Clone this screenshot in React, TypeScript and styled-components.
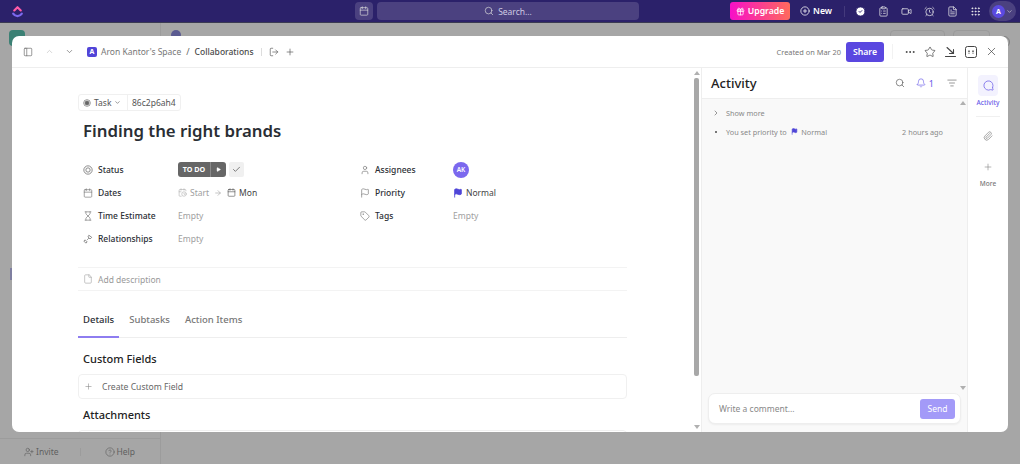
import React from "react";
import styled, { createGlobalStyle } from "styled-components";
import {
  Search, Calendar, CircleCheck, ClipboardList, Video, AlarmClock, FileText, Grip, ChevronDown, ChevronUp, ChevronRight,
  PanelLeft, LogOut, Plus, Ellipsis, Star, X, User, Flag, Tag, Hourglass, File, Bell,
  ListFilter, Paperclip, MessageCircle, Check, Play, ArrowRight, CirclePlus, CalendarClock, UserPlus, CircleHelp, Gift,
} from "lucide-react";

const Global = createGlobalStyle`
  html, body { margin: 0; padding: 0; height: 100%; overflow: hidden; }
  body { font-family: "Noto Sans", "Liberation Sans", sans-serif; background: #a6a6a6; }
  * { box-sizing: border-box; }
`;

const Page = styled.div`position: relative; width: 1020px; height: 464px; overflow: hidden; background: #a6a6a6; display: flex; flex-direction: column;`;
const TopBar = styled.header`height: 23px; background: #2b216a; display: flex; align-items: center; color: #fff; border-bottom: 1px solid #3a3a52; flex-shrink: 0;`;
const Logo = styled.svg`margin-left: 11px; width: 13px; height: 13px;`;
const Center = styled.div`margin-left: 331px; display: flex; gap: 4px; align-items: center;`;
const CalBtn = styled.div`width: 18px; height: 18px; border-radius: 4px; background: #4b4180; display: flex; align-items: center; justify-content: center;`;
const SearchBox = styled.div`width: 262px; height: 18px; border-radius: 4px; background: #4b4180; display: flex; align-items: center; justify-content: center; gap: 4px; font-size: 8.5px; color: #cfcbe3;`;
const Upgrade = styled.div`margin-left: 91px; width: 60px; height: 18px; border-radius: 3px; background: linear-gradient(90deg, #f70fc8, #ff6a5c); display: flex; align-items: center; justify-content: center; gap: 3px; font-size: 8.7px; font-weight: 600;`;
const NewBtn = styled.div`margin-left: 10px; display: flex; align-items: center; gap: 3px; font-size: 8.7px; font-weight: 600;`;
const BarRule = styled.div`margin-left: 12px; width: 1px; height: 11px; background: #443a7c;`;
const BarIcons = styled.div`margin-left: 10px; display: flex; gap: 12px; align-items: center;`;
const AvatarPill = styled.div`margin-left: 8px; width: 27px; height: 20px; border-radius: 10px; background: #4b4180; display: flex; align-items: center; padding-left: 3px; gap: 1px;`;
const AvatarDot = styled.div`width: 13px; height: 13px; border-radius: 50%; background: #5b4ae0; font-size: 7px; font-weight: 700; display: flex; align-items: center; justify-content: center;`;

const Behind = styled.div`flex: 1; display: grid; grid-template-columns: 161px 1fr; min-height: 0;`;
const BehindSide = styled.aside`border-right: 1px solid #9c9c9c; display: flex; flex-direction: column; padding-top: 7px;`;
const GhostTile = styled.div`margin-left: 9px; width: 16px; height: 16px; border-radius: 4px; background: #3b8074; flex-shrink: 0;`;
const GhostBlock = styled.div`margin: 222px 0 0 10px; width: 4px; height: 12px; background: #7f7fa0;`;
const BehindMain = styled.div`display: flex; align-items: flex-start; padding: 7px 10px 0 10px; gap: 8px;`;
const GhostDot = styled.div`width: 10px; height: 10px; border-radius: 50%; background: #5a5a90;`;
const GhostPill = styled.div<{ $w: number; $first?: boolean }>`width: ${p => p.$w}px; height: 14px; border: 1px solid #9a9a9a; border-radius: 4px; ${p => p.$first ? "margin-left: auto;" : ""}`;
const GhostCircle = styled.div`width: 12px; height: 12px; border-radius: 50%; border: 1px solid #808080; margin-top: 6px;`;
const Foot = styled.div`height: 26px; margin-top: auto; border-top: 1px solid #9c9c9c; display: flex; align-items: center; padding-left: 24px; font-size: 8.5px; color: #5f5f5f;`;
const FootItem = styled.span`display: flex; align-items: center; gap: 2px;`;
const FootRule = styled.span`width: 1px; height: 8px; background: #9c9c9c; margin: 0 24px 0 21px;`;

const Modal = styled.section`position: absolute; left: 12px; top: 36px; width: 996px; height: 396px; background: #fff; border-radius: 7px; display: flex; flex-direction: column; overflow: hidden;`;
const ModalHead = styled.div`height: 32px; flex-shrink: 0; border-bottom: 1px solid #eeeeee; display: flex; align-items: center; padding: 0 10px 0 11px; color: #555;`;
const Crumb = styled.span<{ $strong?: boolean }>`font-size: 8.5px; color: ${p => p.$strong ? "#4a4a4a" : "#777"}; font-weight: ${p => p.$strong ? 500 : 400};`;
const SpaceIcon = styled.div`width: 10px; height: 10px; border-radius: 2px; background: #5145d8; color: #fff; font-size: 7px; font-weight: 700; display: flex; align-items: center; justify-content: center; margin-left: 13px; margin-right: 4px;`;
const Nav = styled.div`display: flex; align-items: center; gap: 11px; margin-left: 12px;`;
const Slash = styled.span`font-size: 9px; color: #666; margin: 0 5px;`;
const HeadRule = styled.div`width: 1px; height: 8px; background: #ddd; margin: 0 7px;`;
const HeadGap = styled.span`width: 6px;`;
const Spacer = styled.div`flex: 1;`;
const Created = styled.span`font-size: 7.4px; color: #777; margin-right: 5px;`;
const Share = styled.div`width: 38px; height: 20px; background: #5a47e0; color: #fff; border-radius: 3px; display: flex; align-items: center; justify-content: center; font-size: 8.7px; font-weight: 600;`;
const ShareRule = styled.div`width: 1px; height: 15px; background: #f2f2f2; margin: 0 11px 0 8px;`;
const HeadActions = styled.div`display: flex; align-items: center; gap: 8px; color: #444;`;

const Body = styled.div`flex: 1; display: flex; min-height: 0;`;
const Main = styled.div`width: 680px; padding: 26px 0 0 66px; overflow: hidden; flex-shrink: 0;`;
const Inner = styled.div`width: 549px;`;
const TaskPill = styled.div`display: flex; width: 103px; align-items: center; height: 17px; border: 1px solid #f0f0f0; border-radius: 3px; font-size: 8.5px; color: #555;`;
const TaskPart = styled.span`display: flex; align-items: center; gap: 3px; padding: 0 0 0 4px; width: 48px; height: 100%;`;
const IdPart = styled.span`padding: 0 4px; border-left: 1px solid #f0f0f0; height: 100%; display: flex; align-items: center;`;
const Title = styled.h1`margin: 7px 0 0 5px; font-size: 16.8px; line-height: 26px; font-weight: 600; color: #2a2e34;`;
const Fields = styled.div`margin-top: 14px; display: grid; grid-template-columns: 277px 1fr; padding-left: 5px;`;
const FieldCol = styled.div`display: flex; flex-direction: column;`;
const Row = styled.div<{ $w: number }>`height: 23px; display: grid; grid-template-columns: ${p => p.$w}px 1fr; align-items: center;`;
const Label = styled.span`display: flex; align-items: center; gap: 5px; font-size: 8.5px; font-weight: 500; color: #2a2e34;`;
const Value = styled.span`display: flex; align-items: center; font-size: 8.5px; color: #a0a0a0; gap: 3px;`;
const Dark = styled.span`color: #444; display: flex; align-items: center; gap: 3px;`;
const StatusBtn = styled.div`height: 15px; width: 48px; background: #666; border-radius: 3px; color: #fff; font-size: 7.2px; font-weight: 700; display: flex; align-items: center;`;
const StatusText = styled.span`width: 33px; text-align: center; border-right: 1px solid #8a8a8a; line-height: 15px;`;
const CheckBtn = styled.div`width: 15px; height: 15px; background: #f0f0f0; border-radius: 2px; display: flex; align-items: center; justify-content: center;`;
const Avatar = styled.div`width: 16px; height: 16px; border-radius: 50%; background: #7b68ee; color: #fff; font-size: 6.5px; font-weight: 600; display: flex; align-items: center; justify-content: center;`;
const Desc = styled.div`margin-top: 17px; height: 24px; border-top: 1px solid #f3f3f3; border-bottom: 1px solid #f3f3f3; display: flex; align-items: center; gap: 5px; padding-left: 5px; font-size: 8.5px; color: #999;`;
const Tabs = styled.div`margin-top: 21px; height: 26px; border-bottom: 1px solid #eeeeee; display: flex; font-size: 9.5px;`;
const Tab = styled.div<{ $on?: boolean }>`padding: 0 5px; margin-right: 5px; height: 26px; display: flex; align-items: flex-start; line-height: 16px; font-weight: 500; color: ${p => p.$on ? "#2a2e34" : "#777"}; border-bottom: ${p => p.$on ? "2px solid #8e7df0" : "none"};`;
const Section = styled.h2<{ $gap: number }>`margin: ${p => p.$gap}px 0 0 5px; font-size: 11px; font-weight: 500; color: #222; line-height: 16px;`;
const CreateBox = styled.div`margin-top: 7px; height: 25px; border: 1px solid #f0f0f0; border-radius: 4px; display: flex; align-items: center; gap: 9px; padding-left: 5px; font-size: 8.6px; color: #666;`;
const AttachBox = styled.div`margin-top: 7px; height: 25px; border: 1px solid #f0f0f0; border-radius: 4px;`;

const Scroll = styled.div`width: 9px; flex-shrink: 0; display: flex; flex-direction: column; align-items: center; padding: 3px 0; gap: 3px;`;
const UpArrow = styled.div`width: 0; height: 0; border: 3px solid transparent; border-top: 0; border-bottom: 4px solid #b0b0b0;`;
const DownArrow = styled.div`width: 0; height: 0; border: 3px solid transparent; border-bottom: 0; border-top: 4px solid #b0b0b0; margin-top: auto;`;
const Thumb = styled.div`width: 5px; height: 298px; background: #a8a8a8; border-radius: 2px;`;

const Activity = styled.div`width: 267px; flex-shrink: 0; display: flex; flex-direction: column; border-left: 1px solid #eee; border-right: 1px solid #eee; position: relative;`;
const ActHead = styled.div`height: 31px; display: flex; align-items: center; padding: 0 10px 0 9px; border-bottom: 1px solid #eee; color: #555;`;
const ActTitle = styled.h2`margin: 0; font-size: 13px; font-weight: 500; color: #222;`;
const Notif = styled.span`display: flex; align-items: center; gap: 3px; color: #6a5ce8; font-size: 9px; margin: 0 13px 0 11px;`;
const Feed = styled.div`flex: 1; background: #f9f9f9; padding: 9px 0 0 10px; position: relative; display: flex; flex-direction: column; gap: 10px;`;
const FeedRow = styled.div`display: flex; align-items: center; font-size: 7.3px; color: #888; height: 9px;`;
const Bullet = styled.span`width: 2px; height: 2px; background: #777; margin: 0 9px 0 3px; flex-shrink: 0;`;
const Time = styled.span`margin-left: 75px;`;
const FeedScroll = styled.div`position: absolute; right: 1px; top: 2px; bottom: 42px; display: flex; flex-direction: column; align-items: center;`;
const Comment = styled.div`position: absolute; left: 6px; bottom: 8px; width: 253px; height: 31px; background: #fff; border: 1px solid #eee; border-radius: 7px; box-shadow: 0 1px 2px rgba(0,0,0,.05); display: flex; align-items: center; justify-content: space-between; padding: 0 5px 0 10px; font-size: 8.5px; color: #888;`;
const Send = styled.div`width: 35px; height: 20px; background: #a39af8; color: #fff; border-radius: 3px; font-size: 8.5px; display: flex; align-items: center; justify-content: center;`;

const Rail = styled.div`flex: 1; display: flex; flex-direction: column; align-items: center; padding-top: 7px; color: #888;`;
const RailBtn = styled.div`width: 20px; height: 21px; background: #f3f2fe; border-radius: 4px; display: flex; align-items: center; justify-content: center; color: #6a5ce8;`;
const RailText = styled.span<{ $on?: boolean }>`font-size: 6.5px; font-weight: 500; margin-top: ${p => p.$on ? 2 : 6}px; color: ${p => p.$on ? "#6a5ce8" : "#777"};`;
const RailRule = styled.div`width: 24px; height: 1px; background: #f0f0f0; margin: 9px 0 13px;`;
const RailIcon = styled.div`height: 12px; display: flex; align-items: center; margin-bottom: 19px;`;
const RailPlus = styled.div`height: 12px; display: flex; align-items: center;`;
const FlipIcon = styled(MessageCircle)`transform: scaleX(-1);`;
const PlayMark = styled(Play)`margin-left: 5px;`;
const DateArrow = styled(ArrowRight)`margin: 0 2px;`;
const FeedChevron = styled(ChevronRight)`margin-right: 6px;`;
const Svg = styled.svg`flex-shrink: 0;`;

const RingIcon = ({ filled, size = 10, color = "#777" }: { filled?: boolean; size?: number; color?: string }) => (
  <Svg width={size} height={size} viewBox="0 0 12 12" fill="none" stroke={color} strokeWidth="1">
    <circle cx="6" cy="6" r="5" />
    {filled ? <circle cx="6" cy="6" r="3" fill={color} /> : <circle cx="6" cy="6" r="2.6" />}
  </Svg>
);
const RelIcon = () => (
  <Svg width="10" height="10" viewBox="0 0 12 12" fill="none" stroke="#777" strokeWidth="1">
    <path d="M2.5 7 L5 9.5 L3.5 11 L1 8.5 Z M7 1.5 L10.5 4 L8.5 6 L6 3.5 Z M5 7 L7 5" />
  </Svg>
);
const DownIcon = () => (
  <Svg width="13" height="12" viewBox="0 0 13 12" fill="none" stroke="#444" strokeWidth="1.1" strokeLinecap="round">
    <path d="M3 1.5 L9.5 7.5 M9.5 3.5 V7.5 H5.5 M1.5 10.5 H11.5" />
  </Svg>
);
const FrameIcon = () => (
  <Svg width="12" height="12" viewBox="0 0 12 12" fill="none" stroke="#444" strokeWidth="1">
    <rect x="0.5" y="0.5" width="11" height="11" rx="2" />
    <path d="M4 4.5 V7.5 M8 4.5 V7.5" strokeWidth="1.4" strokeDasharray="1.4 0.8" />
  </Svg>
);

const sw = 1.6;
const Ic = (C: any, s = 10, c = "#777") => <C size={s} color={c} strokeWidth={sw} />;

export default function App() {
  return (
    <Page>
      <Global />
      <TopBar>
        <Logo viewBox="0 0 24 24" fill="none" strokeWidth="4" strokeLinecap="round" strokeLinejoin="round">
          <path d="M6 10 L12 4 L18 10" stroke="#ff5ca8" />
          <path d="M4 16 C8 22 16 22 20 16" stroke="#7b68ee" />
        </Logo>
        <Center>
          <CalBtn><Calendar size={10} color="#ddd" strokeWidth={1.6} /></CalBtn>
          <SearchBox><Search size={10} color="#ddd" strokeWidth={1.6} />Search...</SearchBox>
        </Center>
        <Upgrade><Gift size={9} color="#fff" strokeWidth={2} />Upgrade</Upgrade>
        <NewBtn><CirclePlus size={10} color="#fff" strokeWidth={1.8} />New</NewBtn>
        <BarRule />
        <BarIcons>
          <CircleCheck size={11} color="#2b216a" fill="#fff" strokeWidth={2} />
          <ClipboardList size={11} color="#eee" strokeWidth={1.6} />
          <Video size={11} color="#eee" strokeWidth={1.6} />
          <AlarmClock size={11} color="#eee" strokeWidth={1.6} />
          <FileText size={11} color="#eee" strokeWidth={1.6} />
          <Grip size={11} color="#eee" strokeWidth={2} />
        </BarIcons>
        <AvatarPill><AvatarDot>A</AvatarDot><ChevronDown size={7} color="#ddd" /></AvatarPill>
      </TopBar>
      <Behind>
        <BehindSide>
          <GhostTile />
          <GhostBlock />
          <Foot>
            <FootItem><UserPlus size={10} color="#5f5f5f" strokeWidth={1.5} />Invite</FootItem>
            <FootRule />
            <FootItem><CircleHelp size={10} color="#5f5f5f" strokeWidth={1.5} />Help</FootItem>
          </Foot>
        </BehindSide>
        <BehindMain>
          <GhostDot />
          <GhostPill $w={55} $first />
          <GhostPill $w={37} />
          <GhostCircle />
        </BehindMain>
      </Behind>
      <Modal>
        <ModalHead>
          <PanelLeft size={10} color="#666" strokeWidth={1.6} />
          <Nav>
            <ChevronUp size={9} color="#bbb" strokeWidth={1.6} />
            <ChevronDown size={9} color="#555" strokeWidth={1.6} />
          </Nav>
          <SpaceIcon>A</SpaceIcon>
          <Crumb>Aron Kantor's Space</Crumb>
          <Slash>/</Slash>
          <Crumb $strong>Collaborations</Crumb>
          <HeadRule />
          <LogOut size={10} color="#555" strokeWidth={1.6} />
          <HeadGap />
          <Plus size={10} color="#555" strokeWidth={1.6} />
          <Spacer />
          <Created>Created on Mar 20</Created>
          <Share>Share</Share>
          <ShareRule />
          <HeadActions>
            <Ellipsis size={12} color="#444" strokeWidth={2} />
            <Star size={12} color="#444" strokeWidth={1.4} />
            <DownIcon />
            <FrameIcon />
            <X size={13} color="#444" strokeWidth={1.3} />
          </HeadActions>
        </ModalHead>
        <Body>
          <Main>
            <Inner>
              <TaskPill>
                <TaskPart><RingIcon filled size={8} color="#666" />Task<ChevronDown size={7} color="#555" /></TaskPart>
                <IdPart>86c2p6ah4</IdPart>
              </TaskPill>
              <Title>Finding the right brands</Title>
              <Fields>
                <FieldCol>
                  <Row $w={95}><Label><RingIcon />Status</Label>
                    <Value>
                      <StatusBtn><StatusText>TO DO</StatusText><PlayMark size={5} fill="#fff" color="#fff" /></StatusBtn>
                      <CheckBtn><Check size={9} color="#555" /></CheckBtn>
                    </Value>
                  </Row>
                  <Row $w={95}><Label>{Ic(Calendar)}Dates</Label>
                    <Value>
                      <CalendarClock size={9} color="#aaa" strokeWidth={1.5} />Start
                      <DateArrow size={8} color="#aaa" />
                      <Dark><Calendar size={9} color="#444" strokeWidth={1.5} />Mon</Dark>
                    </Value>
                  </Row>
                  <Row $w={95}><Label>{Ic(Hourglass)}Time Estimate</Label><Value>Empty</Value></Row>
                  <Row $w={95}><Label><RelIcon />Relationships</Label><Value>Empty</Value></Row>
                </FieldCol>
                <FieldCol>
                  <Row $w={93}><Label>{Ic(User)}Assignees</Label><Value><Avatar>AK</Avatar></Value></Row>
                  <Row $w={93}><Label>{Ic(Flag)}Priority</Label><Value><Flag size={10} color="#4f46d8" fill="#4f46d8" /><Dark>Normal</Dark></Value></Row>
                  <Row $w={93}><Label>{Ic(Tag)}Tags</Label><Value>Empty</Value></Row>
                </FieldCol>
              </Fields>
              <Desc>{Ic(File, 10, "#aaa")}Add description</Desc>
              <Tabs>
                <Tab $on>Details</Tab>
                <Tab>Subtasks</Tab>
                <Tab>Action Items</Tab>
              </Tabs>
              <Section $gap={13}>Custom Fields</Section>
              <CreateBox><Plus size={9} color="#888" strokeWidth={1.5} />Create Custom Field</CreateBox>
              <Section $gap={8}>Attachments</Section>
              <AttachBox />
            </Inner>
          </Main>
          <Scroll><UpArrow /><Thumb /><DownArrow /></Scroll>
          <Activity>
            <ActHead>
              <ActTitle>Activity</ActTitle>
              <Spacer />
              <Search size={10} color="#555" strokeWidth={1.6} />
              <Notif><Bell size={10} color="#6a5ce8" strokeWidth={1.6} />1</Notif>
              <ListFilter size={10} color="#666" strokeWidth={1.6} />
            </ActHead>
            <Feed>
              <FeedRow><FeedChevron size={8} color="#666" />Show more</FeedRow>
              <FeedRow><Bullet />You set priority to&nbsp;&nbsp;<Flag size={7} color="#4f46d8" fill="#4f46d8" />&nbsp;&nbsp;Normal<Time>2 hours ago</Time></FeedRow>
              <FeedScroll><UpArrow /><DownArrow /></FeedScroll>
              <Comment>Write a comment...<Send>Send</Send></Comment>
            </Feed>
          </Activity>
          <Rail>
            <RailBtn><FlipIcon size={11} color="#6a5ce8" strokeWidth={1.6} /></RailBtn>
            <RailText $on>Activity</RailText>
            <RailRule />
            <RailIcon><Paperclip size={10} color="#777" strokeWidth={1.5} /></RailIcon>
            <RailPlus><Plus size={10} color="#777" strokeWidth={1.3} /></RailPlus>
            <RailText>More</RailText>
          </Rail>
        </Body>
      </Modal>
    </Page>
  );
}
